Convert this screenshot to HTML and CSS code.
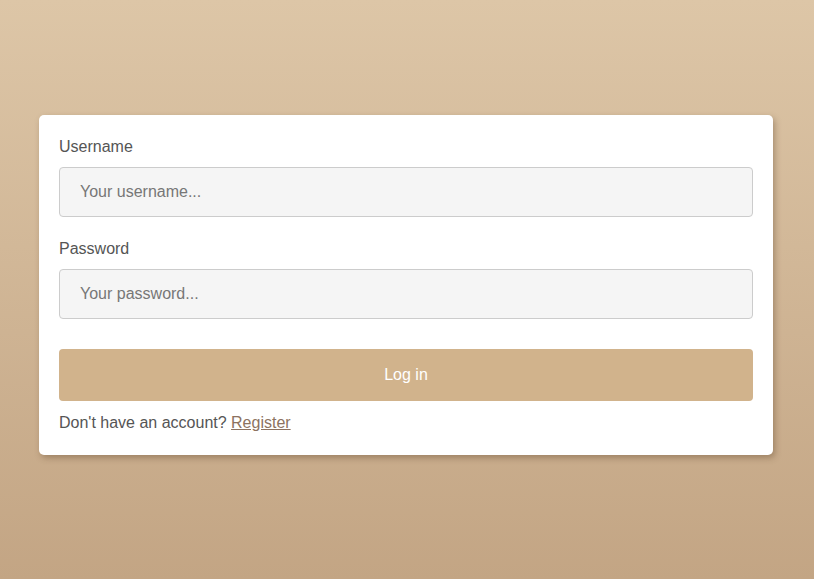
FILE: index.html
```html
<!DOCTYPE html>
<html lang="en">
<head>
<meta charset="utf-8">
<title>Log in</title>
<link rel="stylesheet" href="styles.css">
</head>
<body>
<main class="page">
  <form class="card">
    <label class="label" for="username">Username</label>
    <input class="input" id="username" type="text" placeholder="Your username...">
    <label class="label label-second" for="password">Password</label>
    <input class="input" id="password" type="password" placeholder="Your password...">
    <button class="button" type="button">Log in</button>
    <p class="note">Don't have an account? <a class="link" href="#">Register</a></p>
  </form>
</main>
</body>
</html>
```
FILE: styles.css
```css
html, body {
  margin: 0;
  padding: 0;
  height: 100%;
}
body {
  font-family: "Liberation Sans", Arial, sans-serif;
  font-size: 16px;
  color: #555555;
  background: linear-gradient(to bottom, #ddc6a7 0%, #c3a584 100%);
  background-attachment: fixed;
}
.page {
  min-height: 100%;
  display: flex;
  justify-content: center;
  align-items: flex-start;
  padding-top: 115px;
  box-sizing: border-box;
}
.card {
  width: 734px;
  margin-left: -2px;
  box-sizing: border-box;
  background: #ffffff;
  border-radius: 5px;
  padding: 20px 20px 20px;
  display: flex;
  flex-direction: column;
  box-shadow: 2px 3px 6px rgba(80, 55, 30, 0.35);
}
.label {
  display: block;
  line-height: 24px;
  margin-bottom: 8px;
  color: #555555;
}
.label-second {
  margin-top: 20px;
}
.input {
  height: 50px;
  box-sizing: border-box;
  border: 1px solid #cccccc;
  border-radius: 4px;
  background: #f5f5f5;
  padding: 0 20px;
  font-family: inherit;
  font-size: 16px;
  color: #555555;
  outline: none;
}
.input::placeholder {
  color: #777777;
  opacity: 1;
}
.button {
  margin-top: 30px;
  height: 52px;
  border: none;
  border-radius: 4px;
  background: #d1b38c;
  color: #ffffff;
  font-family: inherit;
  font-size: 16px;
  cursor: pointer;
}
.note {
  margin: 10px 0 0;
  line-height: 24px;
  color: #555555;
}
.link {
  color: #8c7260;
  text-decoration: underline;
}
```
